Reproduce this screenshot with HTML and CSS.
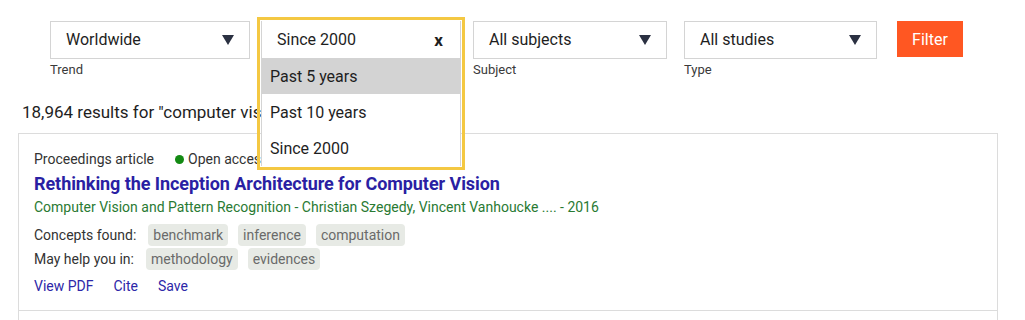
FILE: index.html
```html
<!DOCTYPE html>
<html lang="en">
<head>
<meta charset="utf-8">
<title>Search results</title>
<link rel="stylesheet" href="styles.css">
</head>
<body>
<div class="filters">
  <div class="field f-trend">
    <div class="select">
      <span>Worldwide</span>
      <svg class="caret" width="12" height="10" viewBox="0 0 12 10"><polygon points="0,0 12,0 6,10" fill="#2b3142"/></svg>
    </div>
    <div class="label">Trend</div>
  </div>
  <div class="field f-date">
    <div class="select select-open"><span>Since 2000</span></div>
    <div class="dropdown">
      <div class="dd-head"><span>Since 2000</span><span class="close">x</span></div>
      <div class="dd-opt active">Past 5 years</div>
      <div class="dd-opt">Past 10 years</div>
      <div class="dd-opt">Since 2000</div>
    </div>
  </div>
  <div class="field f-subject">
    <div class="select">
      <span>All subjects</span>
      <svg class="caret" width="12" height="10" viewBox="0 0 12 10"><polygon points="0,0 12,0 6,10" fill="#2b3142"/></svg>
    </div>
    <div class="label">Subject</div>
  </div>
  <div class="field f-type">
    <div class="select">
      <span>All studies</span>
      <svg class="caret" width="12" height="10" viewBox="0 0 12 10"><polygon points="0,0 12,0 6,10" fill="#2b3142"/></svg>
    </div>
    <div class="label">Type</div>
  </div>
  <button class="btn-filter">Filter</button>
</div>

<div class="results-count">18,964 results for "computer vision"</div>

<div class="card">
  <div class="meta">
    <span>Proceedings article</span>
    <span class="oa"><span class="dot"></span>Open access</span>
  </div>
  <a class="title" href="#">Rethinking the Inception Architecture for Computer Vision</a>
  <div class="source">Computer Vision and Pattern Recognition - Christian Szegedy, Vincent Vanhoucke .... - 2016</div>
  <div class="tagrow"><span class="tl">Concepts found:</span><span class="tag">benchmark</span><span class="tag">inference</span><span class="tag">computation</span></div>
  <div class="tagrow"><span class="tl">May help you in:</span><span class="tag">methodology</span><span class="tag">evidences</span></div>
  <div class="links"><a href="#">View PDF</a><a href="#">Cite</a><a href="#">Save</a></div>
</div>
<div class="card card-next"></div>
</body>
</html>
```

FILE: styles.css
```css
* { box-sizing: border-box; }
body {
  margin: 0;
  font-family: Roboto, "Liberation Sans", sans-serif;
  color: #222;
  background: #fff;
}
.filters {
  display: flex;
  align-items: flex-start;
  padding: 21px 0 0 50px;
}
.field { position: relative; }
.f-trend { width: 200px; }
.f-date { width: 200px; margin-left: 11px; }
.f-subject { width: 194px; margin-left: 12px; }
.f-type { width: 193px; margin-left: 17px; }
.select {
  height: 38px;
  border: 1px solid #d4d4d4;
  display: flex;
  align-items: center;
  justify-content: space-between;
  padding: 0 15px 1px 15px;
  font-size: 16px;
  color: #1e1e1e;
}
.caret { display: block; margin-top: 1px; }
.label {
  font-size: 13px;
  color: #3a3a3a;
  margin-top: 3px;
  line-height: 16px;
}
.btn-filter {
  margin-left: 20px;
  width: 66px;
  height: 36px;
  border: 0;
  background: #ff5722;
  color: #fff;
  font-family: Roboto, "Liberation Sans", sans-serif;
  font-size: 16px;
  padding: 0;
}
.dropdown {
  position: absolute;
  top: 0;
  left: 0;
  width: 200px;
  background: #fff;
  border-left: 1px solid #d4d4d4;
  border-right: 1px solid #d4d4d4;
  outline: 3px solid #f4c842;
  outline-offset: 1px;
  z-index: 5;
}
.dd-head {
  height: 37px;
  display: flex;
  align-items: center;
  justify-content: space-between;
  padding: 0 17px 0 15px;
  font-size: 16px;
  color: #1e1e1e;
}
.close { font-weight: 700; font-size: 17px; }
.dd-opt {
  height: 36px;
  display: flex;
  align-items: center;
  padding-left: 8px;
  font-size: 16px;
  color: #1e1e1e;
}
.dd-opt.active { background: #d3d3d3; }
.results-count {
  margin: 23px 0 0 22px;
  font-size: 17px;
  line-height: 22px;
  color: #1e1e1e;
}
.card {
  margin: 10px 27px 0 18px;
  border: 1px solid #dcdcdc;
  padding: 15px 15px 14px 15px;
}
.meta {
  font-size: 14px;
  line-height: 20px;
  color: #333;
  display: flex;
  gap: 21px;
}
.oa { display: inline-flex; align-items: center; }
.dot {
  width: 9px; height: 9px; border-radius: 50%;
  background: #138a13; margin-right: 4px;
}
.title {
  display: block;
  margin-top: 4px;
  font-size: 18px;
  font-weight: 700;
  line-height: 22px;
  letter-spacing: -0.07px;
  color: #2a1fa3;
  text-decoration: none;
}
.source {
  margin-top: 2px;
  font-size: 14px;
  line-height: 20px;
  color: #2a7a33;
}
.tagrow {
  display: flex;
  align-items: center;
  font-size: 14px;
  line-height: 22px;
  color: #333;
  margin-top: 7px;
}
.tagrow + .tagrow { margin-top: 2px; }
.tl { margin-right: 12px; }
.tag {
  background: #e7eae5;
  color: #6a6a6a;
  padding: 0 5px;
  border-radius: 4px;
  margin-right: 10px;
}
.links {
  margin-top: 6px;
  font-size: 14px;
  line-height: 20px;
  display: flex;
  gap: 20px;
}
.links a { color: #2d27a8; text-decoration: none; }
.card-next {
  margin-top: -1px;
  height: 20px;
  padding: 0;
  border-bottom: 0;
}
```
